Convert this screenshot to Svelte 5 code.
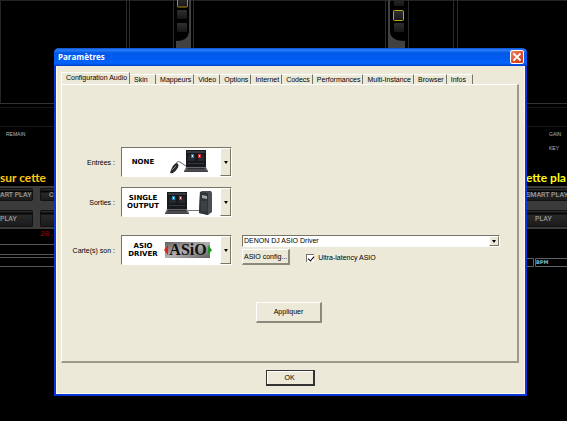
<script>
    const tabs = [
        'Configuration Audio', 'Skin', 'Mappeurs', 'Video', 'Options', 'Internet',
        'Codecs', 'Performances', 'Multi-Instance', 'Browser', 'Infos'
    ];
    let activeTab = $state('Configuration Audio');

    // The three picture drop-downs
    const routes = [
        { id: 'inputs', label: 'Entrées :', lines: ['NONE'], art: 'laptop' },
        { id: 'outputs', label: 'Sorties :', lines: ['SINGLE', 'OUTPUT'], art: 'speaker' },
        { id: 'card', label: 'Carte(s) son :', lines: ['ASIO', 'DRIVER'], art: 'asio' }
    ];

    let ultraLatency = $state(true);
    let open = $state(true);
</script>

{#snippet laptop()}
    <path d="M2 1H22V18H2Z" fill="#18191c" />
    <path d="M3 2H21V4H3Z" fill="#34393f" />
    <path d="M4 6H11V12H4ZM14 6H20V12H14Z" fill="#25292e" />
    <path d="M7 5H10V9H7Z" fill="#2686b9" />
    <path d="M14 5H17V9H14Z" fill="#c92b30" />
    <path d="M8 6H9V8H8ZM15 6H16V8H15Z" fill="#ddd" />
    <path d="M4 14.5H20" stroke="#33373b" />
    <path d="M2 18H22L24 22H0Z" fill="#66686c" />
    <path d="M3 19.5H21M2 21H22" stroke="#2c2e32" />
    <path d="M0 22H24V23H0Z" fill="#404248" />
{/snippet}

<main>
    <svg class="hardware" viewBox="0 0 567 421" preserveAspectRatio="xMidYMin slice" aria-hidden="true">
        <defs>
            <linearGradient id="slot" x2="0" y2="1">
                <stop offset="0" stop-color="#303030" />
                <stop offset="1" stop-color="#161616" />
            </linearGradient>
        </defs>
        <path d="M0 0.5H567M0.5 0V103" stroke="#252525" />
        <path d="M126.5 0V60M129.5 0V60M173.5 0V60M193.5 0V60M385.5 0V60M408.5 0V60M453.5 0V60M457.5 0V60" stroke="#2a2a2a" />
        <path d="M0 103.5H567" stroke="#333" />
        <path d="M0 107.5H567M0 126.5H567" stroke="#171717" />
        <path d="M189 0V32Q188 41 176 41V60H191V0Z" fill="#414141" />
        <path d="M390 0V32Q391 41 405 41V60H388V0Z" fill="#414141" />
        <g fill="url(#slot)">
            <rect x="177.5" y="-3" width="10" height="10" rx="1" stroke="#af8b13" />
            <rect x="177" y="10" width="10" height="9" rx="1" />
            <rect x="177" y="23" width="10" height="9" rx="1" />
            <rect x="394" y="-3" width="10" height="9" rx="1" />
            <rect x="393.5" y="10.5" width="10" height="10" rx="1" stroke="#b8a91c" />
            <rect x="394" y="23" width="10" height="9" rx="1" />
        </g>
        <path d="M0 244.5H54M0 254.5H54M0 257.5H54M0 266.5H54" stroke="#555" />
        <path d="M520 258.5H533.5V266.5H520M567 258.5H535.5V266.5H567" fill="none" stroke="#58646a" />
    </svg>

    <section class="deck left">
        <p class="tiny">REMAIN</p>
        <p class="track">sur cette</p>
        <div class="pads">
            <div class="pad-row"><button>ART PLAY</button><button class="next">C</button></div>
            <div class="pad-row tall"><button>PLAY</button><button class="next" aria-label="C"></button></div>
        </div>
        <p class="counter">20.</p>
    </section>

    <section class="deck right">
        <div class="readings"><p class="tiny">GAIN</p><p class="tiny">KEY</p></div>
        <p class="track">ette pla</p>
        <div class="pads">
            <div class="pad-row"><button>SMART PLAY</button></div>
            <div class="pad-row tall"><button>PLAY</button></div>
        </div>
        <p class="bpm">BPM</p>
    </section>

    {#if open}
    <div class="dialog" role="dialog" aria-labelledby="title">
        <header>
            <h1 id="title">Paramètres</h1>
            <button class="close" aria-label="Fermer" onclick={() => (open = false)}>
                <svg viewBox="0 0 12 12" width="12" height="12"><path d="M2.5 2.5L9.5 9.5M9.5 2.5L2.5 9.5" stroke="#fff" stroke-width="1.8" /></svg>
            </button>
        </header>
        <div class="body">
            <div class="tabs" role="tablist">
                {#each tabs as tab}
                    <button role="tab" aria-selected={tab === activeTab} class:active={tab === activeTab}
                        onclick={() => (activeTab = tab)}>{tab}</button>
                {/each}
            </div>
            <div class="panel" role="tabpanel">
                <div class="form">
                    {#each routes as route}
                        <div class="row" class:last={route.id === 'card'}>
                            <label for={route.id}>{route.label}</label>
                            <div class="combo">
                                <div class="face" aria-hidden="true">
                                    <span class="caption">
                                        {#each route.lines as line}<span>{line}</span>{/each}
                                    </span>
                                    {#if route.art === 'laptop'}
                                        <svg viewBox="0 0 54 26" width="54" height="26">
                                            <path d="M11 17Q13 11 16 13T22 17" fill="none" stroke="#666" />
                                            <path d="M7 21Q9 15 13 14Q16 16 13 20Q10 25 6 24Z" fill="#292929" />
                                            <path d="M8 21L12 17" stroke="#8b8b8b" />
                                            <g transform="translate(20 0)">{@render laptop()}</g>
                                        </svg>
                                    {:else if route.art === 'speaker'}
                                        <svg viewBox="0 0 54 26" width="54" height="26">
                                            <g transform="translate(1 2)">{@render laptop()}</g>
                                            <path d="M24 21.5H37" stroke="#777" />
                                            <path d="M36 3L38 2H47L48 4V23L44 26L35 24Z" fill="#4b4e52" />
                                            <path d="M36 3L44 4V26L35 24Z" fill="#303338" />
                                            <path d="M38 6L43 7V10L38 9Z" fill="#a1a4a6" />
                                            <path d="M37 13H43M37 15H43M37 17H43M37 19H43M37 21H43" stroke="#4a4f54" />
                                        </svg>
                                    {:else}
                                        <svg viewBox="0 0 54 26" width="54" height="26">
                                            <defs>
                                                <linearGradient id="plate" x2="1" y2="1">
                                                    <stop offset="0" stop-color="#656263" />
                                                    <stop offset="0.5" stop-color="#b4b0af" />
                                                    <stop offset="1" stop-color="#625d5e" />
                                                </linearGradient>
                                            </defs>
                                            <rect x="1" y="5" width="45" height="16" fill="url(#plate)" />
                                            <text class="asio" x="24" y="18" text-anchor="middle">ASiO</text>
                                            <path d="M0 13L4 8V18Z" fill="#e72020" />
                                            <path d="M48 13L44 8V18Z" fill="#239427" />
                                        </svg>
                                    {/if}
                                    <span class="arrow"></span>
                                </div>
                                <select id={route.id}><option>{route.lines.join(' ')}</option></select>
                            </div>
                            {#if route.id === 'card'}
                                <div class="driver">
                                    <div class="driver-box">
                                        <select aria-label="ASIO"><option>DENON DJ ASIO Driver</option></select>
                                        <span class="arrow"></span>
                                    </div>
                                    <div class="driver-options">
                                        <button class="raised config">ASIO config...</button>
                                        <label><input type="checkbox" bind:checked={ultraLatency} />Ultra-latency ASIO</label>
                                    </div>
                                </div>
                            {/if}
                        </div>
                    {/each}
                </div>
                <button class="raised apply">Appliquer</button>
            </div>
            <button class="ok" onclick={() => (open = false)}>OK</button>
        </div>
    </div>
    {/if}
</main>

<style>
    :global(body) {
        margin: 0;
        background: #000;
    }

    main {
        position: relative;
        min-height: 100vh;
        display: flex;
        justify-content: space-between;
        overflow: hidden;
        background: #000;
        font-family: "Liberation Sans", Arial, sans-serif;
        font-size: 7px;
        line-height: 10px;
        color: #000;
    }

    * {
        box-sizing: border-box;
    }

    button, select, input {
        font: inherit;
        color: inherit;
        margin: 0;
        padding: 0;
        border: 0;
        border-radius: 0;
    }

    p, h1 {
        margin: 0;
    }

    svg {
        display: block;
    }

    .hardware {
        position: absolute;
        top: 0;
        left: 0;
        width: 100%;
        height: 100%;
    }

    /* Decks behind the dialog */
    .deck {
        position: relative;
        padding-top: 129px;
        white-space: nowrap;
        font-family: Roboto, sans-serif;
    }

    .left {
        width: 54px;
    }

    .right {
        width: 41px;
    }

    .tiny {
        font-family: "Liberation Sans", sans-serif;
        font-size: 5px;
        color: #bbb;
        padding-left: 6px;
    }

    .readings {
        display: grid;
        gap: 4px;
        padding-left: 17px;
    }

    .track {
        font-family: Lato, sans-serif;
        font-size: 12px;
        font-weight: 700;
        line-height: 17px;
        color: #ffc814;
        margin-top: 30px;
    }

    .right .track {
        color: #ffff10;
        margin-top: 16px;
    }

    .pads {
        display: grid;
        gap: 9px;
        padding: 2px 0;
        background: #3b3b3b;
    }

    .pad-row {
        display: flex;
        gap: 7px;
    }

    .pad-row button {
        flex: 1;
        height: 13px;
        border: 1px solid #111;
        border-left: 0;
        border-radius: 0 2px 2px 0;
        background: linear-gradient(#2a2a2a 1px, #060606 2px, #060606 3px, #292929 4px, #1b1b1b);
        color: #999;
        font-size: 7px;
        font-weight: 500;
        line-height: 10px;
        text-align: left;
    }

    .left .pad-row button:first-child {
        flex: 0 0 33px;
    }

    .pad-row .next {
        border-left: 1px solid #111;
        border-right: 0;
        border-radius: 2px 0 0 2px;
        padding-left: 8px;
    }

    .right .pad-row button {
        border-right: 0;
        border-radius: 0;
    }

    .pad-row.tall button {
        height: 17px;
    }

    .right .tall button {
        padding-left: 9px;
    }

    .counter {
        font-family: "Liberation Mono", monospace;
        font-size: 8px;
        color: #b00000;
        padding-left: 40px;
    }

    .bpm {
        font-family: "DejaVu Sans", sans-serif;
        font-size: 5px;
        font-weight: 700;
        color: #80b8c8;
        margin-top: 28px;
        padding-left: 10px;
    }

    /* Dialog window */
    .dialog {
        position: absolute;
        top: 48px;
        left: 54px;
        right: 40px;
        background: #0a35dc;
        border-radius: 5px 5px 0 0;
        padding: 0 2px 2px;
    }

    header {
        display: flex;
        align-items: center;
        justify-content: space-between;
        height: 18px;
        margin: 0 -2px;
        padding: 0 3px 0 4px;
        border-radius: 5px 5px 0 0;
        background: linear-gradient(#0a4fd0, #2a80f8 2px, #0058e8 5px, #005cf2 11px, #0064ff 15px, #0040c8);
    }

    h1 {
        font: 700 8px/12px "Open Sans", sans-serif;
        color: #fff;
    }

    .close {
        border: 1px solid #fff;
        border-radius: 2px;
        width: 14px;
        height: 14px;
        display: grid;
        place-items: center;
        background: linear-gradient(135deg, #f09070, #e2502a 50%, #c83c18);
    }

    .body {
        display: flex;
        flex-direction: column;
        background: #ece9d8;
        border: 1px solid #fffbe8;
        border-top: 0;
        padding: 6px 5px 7px 4px;
    }

    .tabs {
        display: flex;
        align-items: flex-end;
        height: 13px;
    }

    .tabs button {
        min-width: 26px;
        height: 11px;
        padding: 0 2px 0 4px;
        border-top: 1px solid #fff;
        border-right: 1px solid #77756a;
        background: none;
        text-align: left;
        white-space: nowrap;
    }

    .tabs .active {
        height: 13px;
        padding-bottom: 2px;
        border-left: 1px solid #fff;
    }

    .panel {
        margin-top: -1px;
        border: 1px solid #fff;
        border-right: 2px solid #9c998a;
        border-bottom: 2px solid #9c998a;
        padding: 62px 17px 38px 0;
    }

    .form {
        display: grid;
        gap: 10px;
    }

    .row {
        display: grid;
        grid-template-columns: 53px 111px 1fr;
        column-gap: 6px;
        align-items: center;
    }

    .last {
        margin-top: 8px;
    }

    .row > label {
        text-align: right;
        white-space: nowrap;
        padding-top: 2px;
    }

    .combo {
        position: relative;
        height: 30px;
        background: #fff;
        border: 1px solid #777469;
        border-right-color: #fff;
        border-bottom-color: #fff;
    }

    .combo select {
        position: absolute;
        inset: 0;
        width: 100%;
        height: 100%;
        opacity: 0;
    }

    .face {
        display: grid;
        grid-template-columns: 42px 1fr 11px;
        align-items: center;
        height: 100%;
    }

    .caption {
        display: grid;
        justify-items: center;
        font: 700 7px/8px "DejaVu Sans", sans-serif;
    }

    .asio {
        font: 700 16px "Liberation Serif", serif;
        fill: #111;
    }

    .arrow {
        display: grid;
        place-items: center;
        height: 100%;
        background: #ece9d8;
        border: 1px solid #fff;
        border-right-color: #777469;
        border-bottom-color: #777469;
    }

    .arrow::before {
        content: "";
        border: 2px solid transparent;
        border-top: 3px solid #000;
        border-bottom: 0;
    }

    .driver {
        display: grid;
        gap: 2px;
        padding-left: 4px;
    }

    .driver-box {
        display: grid;
        grid-template-columns: 1fr 10px;
        height: 12px;
        background: #fff;
        border: 1px solid #777469;
        border-right-color: #fff;
        border-bottom-color: #fff;
    }

    .driver-box select {
        appearance: none;
        background: #fff;
        height: 10px;
        padding-left: 1px;
    }

    .driver-options {
        display: flex;
        align-items: center;
        gap: 16px;
    }

    .driver-options label {
        display: flex;
        align-items: center;
        gap: 4px;
        padding-top: 2px;
    }

    input {
        appearance: none;
        width: 8px;
        height: 8px;
        background: #fff;
        border-top: 1px solid #777469;
        border-left: 1px solid #777469;
    }

    input:checked::before {
        content: "";
        display: block;
        width: 3px;
        height: 5px;
        margin-left: 2px;
        border: solid #000;
        border-width: 0 1px 1px 0;
        transform: rotate(40deg);
    }

    .raised {
        background: #ece9d8;
        border: 1px solid #fff;
        border-right: 2px solid #8d8a7d;
        border-bottom: 2px solid #8d8a7d;
        height: 16px;
    }

    .config {
        padding: 0 1px;
    }

    .apply {
        display: block;
        width: 66px;
        height: 21px;
        margin: 37px auto 0 194px;
    }

    .ok {
        align-self: center;
        width: 49px;
        height: 16px;
        margin-top: 7px;
        background: #ece9d8;
        border: 1px solid #333;
        border-right-width: 2px;
        border-bottom-width: 2px;
        box-shadow: inset 1px 1px #fff;
    }
</style>
